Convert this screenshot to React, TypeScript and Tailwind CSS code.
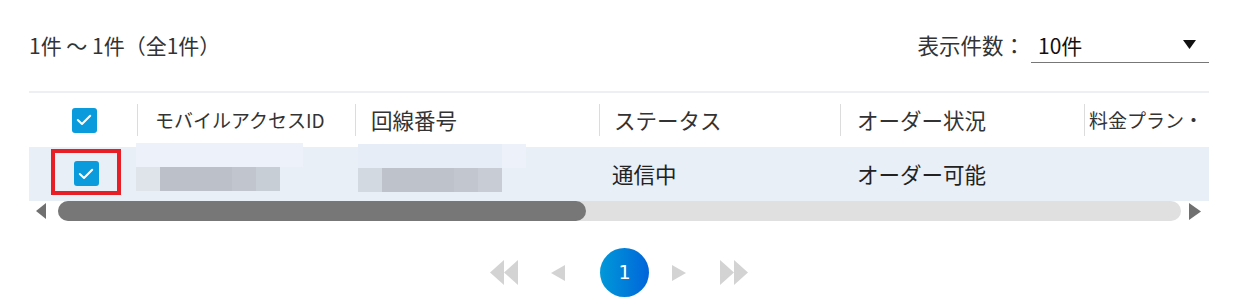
import React from "react";

const font = { fontFamily: '"Noto Sans CJK JP", "Noto Sans", sans-serif' };

function Check() {
  return (
    <div className="flex h-[25px] w-[25px] items-center justify-center rounded-[3px] bg-[#0a9bdc]">
      <svg width="16" height="12" viewBox="0 0 16 12" fill="none">
        <path d="M1.8 6 L6 10 L14.2 1.8" stroke="#fff" strokeWidth="2" strokeLinecap="round" strokeLinejoin="round" />
      </svg>
    </div>
  );
}

function HeadCell({ label, pad, size }: { label: string; pad: string; size: string }) {
  return (
    <div className="flex h-full items-center overflow-hidden">
      <div className="h-[32px] w-px shrink-0 bg-[#dcdcdc]" />
      <span className={`${pad} ${size} whitespace-nowrap text-[#333]`}>{label}</span>
    </div>
  );
}

// blurred (masked) id cells
function Blur({ top, bottom }: { top: { w: string; c: string }[]; bottom: { w: string; c: string }[] }) {
  return (
    <div className="flex flex-col">
      <div className="flex h-[24px]">
        {top.map((b, i) => (
          <div key={i} className={`${b.w} ${b.c} h-full`} />
        ))}
      </div>
      <div className="flex h-[24px]">
        {bottom.map((b, i) => (
          <div key={i} className={`${b.w} ${b.c} h-full`} />
        ))}
      </div>
    </div>
  );
}

export default function App() {
  return (
    <div className="h-[297px] w-[1245px] overflow-hidden bg-white pl-[29px] pt-[30px]" style={font}>
      <div className="w-[1180px]">
        {/* Count + page size */}
        <div className="flex h-[33px] items-start justify-between">
          <span className="text-[21px] leading-[30px] text-[#333]">1件 〜 1件（全1件）</span>
          <div className="flex items-start">
            <span className="text-[21.5px] leading-[30px] text-[#333]">表示件数：</span>
            <div className="ml-[6px] flex h-[33px] w-[178px] items-start justify-between border-b border-[#777] pl-[7px] pr-[13px]">
              <span className="text-[21px] leading-[30px] text-[#111]">10件</span>
              <svg width="13" height="9" viewBox="0 0 13 9" className="mt-[10px]">
                <polygon points="0,0 13,0 6.5,9" fill="#111" />
              </svg>
            </div>
          </div>
        </div>

        {/* Table */}
        <div className="mt-[28px] border-t-2 border-[#edf0f3]">
          <div className="grid h-[54px] grid-cols-[108px_218px_244px_241px_244px_125px]">
            <div className="flex items-center justify-center pl-[2px]">
              <Check />
            </div>
            <HeadCell label="モバイルアクセスID" pad="pl-[17px]" size="text-[19px]" />
            <HeadCell label="回線番号" pad="pl-[15px]" size="text-[21.5px]" />
            <HeadCell label="ステータス" pad="pl-[14px]" size="text-[21.5px]" />
            <HeadCell label="オーダー状況" pad="pl-[16px]" size="text-[21.5px]" />
            <HeadCell label="料金プラン・" pad="pl-[4px]" size="text-[19px]" />
          </div>

          <div className="grid h-[54px] grid-cols-[108px_218px_244px_241px_244px_125px] bg-[#e8eff7]">
            <div className="flex items-center pl-[22px]">
              <div className="-mt-[4px] flex h-[46px] w-[70px] items-center justify-center border-[4px] border-[#e81e26] pt-[3px]">
                <Check />
              </div>
            </div>
            <div className="-ml-px -mt-[4px]">
              <Blur
                top={[{ w: "w-[167px]", c: "bg-[#edf2fa]" }]}
                bottom={[
                  { w: "w-[24px]", c: "bg-[#dfe4eb]" },
                  { w: "w-[72px]", c: "bg-[#bcc0c9]" },
                  { w: "w-[24px]", c: "bg-[#c1c6ce]" },
                  { w: "w-[24px]", c: "bg-[#c8ced6]" },
                ]}
              />
            </div>
            <div className="-mt-[3px] pl-[3px]">
              <Blur
                top={[
                  { w: "w-[144px]", c: "bg-[#e7edf6]" },
                  { w: "w-[24px]", c: "bg-[#edf2fa]" },
                ]}
                bottom={[
                  { w: "w-[24px]", c: "bg-[#d3d9e1]" },
                  { w: "w-[72px]", c: "bg-[#bdc2cb]" },
                  { w: "w-[24px]", c: "bg-[#c2c7cf]" },
                  { w: "w-[24px]", c: "bg-[#c8cdd5]" },
                ]}
              />
            </div>
            <div className="flex items-center pl-[13px] text-[21.5px] text-[#222]">通信中</div>
            <div className="flex items-center pl-[17px] text-[21.5px] text-[#222]">オーダー可能</div>
            <div />
          </div>

          {/* Horizontal scrollbar */}
          <div className="flex h-[20px] items-center">
            <svg width="10" height="16" viewBox="0 0 10 16" className="ml-[7px] shrink-0">
              <polygon points="10,0 10,16 0,8" fill="#707070" />
            </svg>
            <div className="ml-[12px] h-[20px] flex-1 rounded-full bg-[#e0e0e0]">
              <div className="h-full w-[528px] rounded-full bg-[#777]" />
            </div>
            <svg width="12" height="17" viewBox="0 0 12 17" className="ml-[8px] mr-[8px] shrink-0">
              <polygon points="0,0 12,8.5 0,17" fill="#707070" />
            </svg>
          </div>
        </div>
      </div>

      {/* Pagination */}
      <div className="mt-[27px] flex h-[49px] items-center pl-[461px]">
        <svg width="28" height="25" viewBox="0 0 28 25">
          <polygon points="14,0 14,25 0,12.5" fill="#d3d3d3" />
          <polygon points="28,0 28,25 14,12.5" fill="#d3d3d3" />
        </svg>
        <svg width="14" height="16" viewBox="0 0 14 16" className="ml-[33px]">
          <polygon points="14,0 14,16 0,8" fill="#d3d3d3" />
        </svg>
        <div className="ml-[35px] flex h-[49px] w-[49px] items-center justify-center rounded-full bg-gradient-to-r from-[#0598d8] to-[#0064da] text-[19px] text-white" style={{ fontFamily: '"DejaVu Sans", sans-serif' }}>
          1
        </div>
        <svg width="14" height="16" viewBox="0 0 14 16" className="ml-[23px]">
          <polygon points="0,0 14,8 0,16" fill="#d3d3d3" />
        </svg>
        <svg width="28" height="25" viewBox="0 0 28 25" className="ml-[34px]">
          <polygon points="0,0 14,12.5 0,25" fill="#d3d3d3" />
          <polygon points="14,0 28,12.5 14,25" fill="#d3d3d3" />
        </svg>
      </div>
    </div>
  );
}
